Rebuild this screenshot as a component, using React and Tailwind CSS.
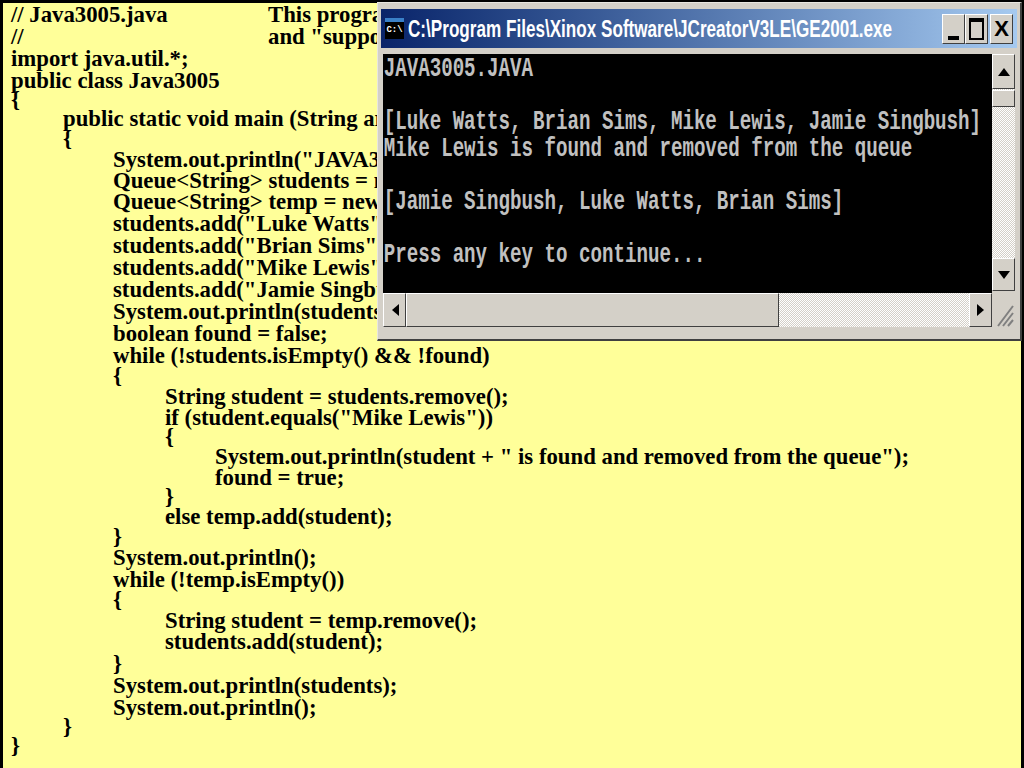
import React from "react";

// each line of the listing: indent class, row height class, text
const lines = [
  ["pl-[8px]", "h-[22px]", "// Java3005.java", "This program"],
  ["pl-[8px]", "h-[22px]", "//", 'and "support"'],
  ["pl-[8px]", "h-[22px]", "import java.util.*;"],
  ["pl-[8px]", "h-[19px]", "public class Java3005"],
  ["pl-[8px]", "h-[19px]", "{"],
  ["pl-[60px]", "h-[20px]", "public static void main (String args[])"],
  ["pl-[60px]", "h-[21px]", "{"],
  ["pl-[110px]", "h-[21px]", 'System.out.println("JAVA3005.JAVA");'],
  ["pl-[110px]", "h-[21px]", "Queue<String> students = new LinkedList<String>();"],
  ["pl-[110px]", "h-[22px]", "Queue<String> temp = new LinkedList<String>();"],
  ["pl-[110px]", "h-[22px]", 'students.add("Luke Watts");'],
  ["pl-[110px]", "h-[22px]", 'students.add("Brian Sims");'],
  ["pl-[110px]", "h-[22px]", 'students.add("Mike Lewis");'],
  ["pl-[110px]", "h-[22px]", 'students.add("Jamie Singbush");'],
  ["pl-[110px]", "h-[22px]", "System.out.println(students);"],
  ["pl-[110px]", "h-[22px]", "boolean found = false;"],
  ["pl-[110px]", "h-[20px]", "while (!students.isEmpty() && !found)"],
  ["pl-[110px]", "h-[21px]", "{"],
  ["pl-[162px]", "h-[21px]", "String student = students.remove();"],
  ["pl-[162px]", "h-[19px]", 'if (student.equals("Mike Lewis"))'],
  ["pl-[162px]", "h-[20px]", "{"],
  ["pl-[212px]", "h-[21px]", 'System.out.println(student + " is found and removed from the queue");'],
  ["pl-[212px]", "h-[19px]", "found = true;"],
  ["pl-[162px]", "h-[20px]", "}"],
  ["pl-[162px]", "h-[20px]", "else temp.add(student);"],
  ["pl-[110px]", "h-[21px]", "}"],
  ["pl-[110px]", "h-[22px]", "System.out.println();"],
  ["pl-[110px]", "h-[20px]", "while (!temp.isEmpty())"],
  ["pl-[110px]", "h-[21px]", "{"],
  ["pl-[162px]", "h-[21px]", "String student = temp.remove();"],
  ["pl-[162px]", "h-[22px]", "students.add(student);"],
  ["pl-[110px]", "h-[22px]", "}"],
  ["pl-[110px]", "h-[22px]", "System.out.println(students);"],
  ["pl-[110px]", "h-[19px]", "System.out.println();"],
  ["pl-[60px]", "h-[19px]", "}"],
  ["pl-[8px]", "h-[22px]", "}"],
];

const raised =
  "border border-t-white border-l-white border-r-[#404040] border-b-[#404040] bg-[#d4d0c8]";

const Listing = () => (
  <div className="h-full flex flex-col border-l-[3px] border-t-[3px] border-r-[3px] border-black pt-[2px] font-['Liberation_Serif',serif] font-bold text-[22.75px] text-black overflow-hidden">
    {lines.map((line, i) => (
      <div key={i} className={`${line[0]} ${line[1]} shrink-0 flex leading-[19px] whitespace-pre`}>
        <span className={line[3] ? "w-[257px]" : ""}>{line[2]}</span>
        {line[3] && <span>{line[3]}</span>}
      </div>
    ))}
  </div>
);

const TitleButton = ({ className, children }) => (
  <div className={`${raised} ${className} h-[30px] flex justify-center`}>{children}</div>
);

const Arrow = ({ points }) => (
  <svg width="14" height="14" viewBox="0 0 14 14">
    <polygon points={points} fill="#000" />
  </svg>
);

const ConsoleWindow = () => (
  <div className="absolute left-[377px] top-[2px] w-[645px] h-[339px] flex flex-col bg-[#d4d0c8] border-r-2 border-b-2 border-r-[#404040] border-b-[#404040] border-t border-l border-t-[#e8e6e0] border-l-[#e8e6e0] pt-[6px] px-[5px]">
    <div className="h-[39px] -mx-[2px] shrink-0 flex items-center pl-[4px] pr-[4px] bg-gradient-to-r from-[#0a246a] to-[#a6caf0]">
      <div className="w-[19px] h-[21px] shrink-0 bg-black border-t-[4px] border-t-[#3a80c8] flex items-center justify-center font-['Liberation_Mono',monospace] text-[9px] font-bold leading-none text-white">
        C:\
      </div>
      <div className="ml-[4px] w-[530px] shrink-0 font-['Liberation_Sans',sans-serif] font-bold text-[24px] leading-none text-white whitespace-nowrap origin-left scale-x-[0.713]">
        C:\Program Files\Xinox Software\JCreatorV3LE\GE2001.exe
      </div>
      <div className="ml-auto flex">
        <TitleButton className="w-[23px] items-end pb-[3px]">
          <div className="w-[11px] h-[4px] bg-black" />
        </TitleButton>
        <TitleButton className="w-[23px] items-center">
          <div className="w-[15px] h-[22px] border-2 border-t-[4px] border-black" />
        </TitleButton>
        <TitleButton className="w-[23px] ml-[2px] items-center font-['Liberation_Sans',sans-serif] font-bold text-[22px] leading-none text-black">
          X
        </TitleButton>
      </div>
    </div>
    <div className="mt-[6px] flex h-[239px] shrink-0">
      <div className="w-[609px] bg-black overflow-hidden">
        <div className="w-[860px] pl-[1px] pt-[2px] origin-left scale-x-[0.709] font-['Liberation_Mono',monospace] font-bold text-[27px] leading-[26.6px] text-[#c0c0c0] whitespace-pre">
          <div>JAVA3005.JAVA</div>
          <div>&nbsp;</div>
          <div>[Luke Watts, Brian Sims, Mike Lewis, Jamie Singbush]</div>
          <div>Mike Lewis is found and removed from the queue</div>
          <div>&nbsp;</div>
          <div>[Jamie Singbush, Luke Watts, Brian Sims]</div>
          <div>&nbsp;</div>
          <div>Press any key to continue...</div>
        </div>
      </div>
      <div className="w-[23px] mb-[2px] flex flex-col bg-[repeating-conic-gradient(#d4d0c8_0_25%,#ffffff_0_50%)] bg-[length:2px_2px]">
        <div className={`${raised} h-[35px] flex items-center justify-center`}>
          <Arrow points="7,3 13,11 1,11" />
        </div>
        <div className={`${raised} h-[17px] mt-[1px]`} />
        <div className={`${raised} h-[33px] mt-auto flex items-center justify-center`}>
          <Arrow points="1,3 13,3 7,11" />
        </div>
      </div>
    </div>
    <div className="flex h-[34px] shrink-0">
      <div className="w-[609px] flex bg-[repeating-conic-gradient(#d4d0c8_0_25%,#ffffff_0_50%)] bg-[length:2px_2px]">
        <div className={`${raised} w-[23px] flex items-center justify-center`}>
          <Arrow points="4,7 11,1 11,13" />
        </div>
        <div className={`${raised} w-[373px]`} />
        <div className={`${raised} w-[23px] ml-auto flex items-center justify-center`}>
          <Arrow points="10,7 3,1 3,13" />
        </div>
      </div>
      <div className="w-[23px] flex items-end justify-end">
        <svg width="18" height="24" viewBox="0 0 18 24">
          <path d="M1 23 L16 3 M6 23 L16 10 M11 23 L16 17" stroke="#808080" strokeWidth="2" fill="none" />
        </svg>
      </div>
    </div>
  </div>
);

export default function App() {
  return (
    <div className="relative w-[1024px] h-[768px] overflow-hidden bg-[#ffff99]">
      <Listing />
      <ConsoleWindow />
    </div>
  );
}
